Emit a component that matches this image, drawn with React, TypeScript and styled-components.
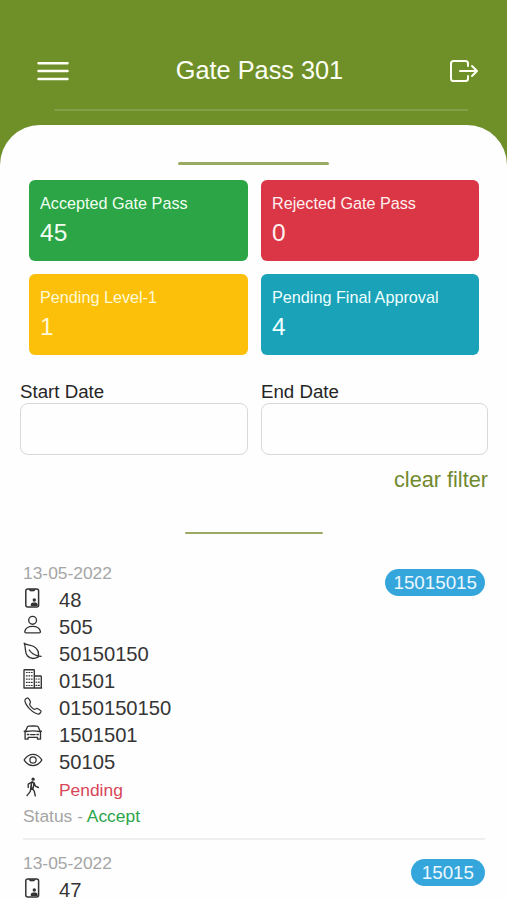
import React from "react";
import styled, { createGlobalStyle } from "styled-components";
import { IoExitOutline, IoCallOutline, IoEyeOutline } from "react-icons/io5";

const GlobalStyle = createGlobalStyle`
  * { box-sizing: border-box; }
  body {
    margin: 0;
    background: #fefefe;
    font-family: "Liberation Sans", Arial, sans-serif;
    overflow: hidden;
  }
`;

const Screen = styled.div`
  width: 507px;
  height: 900px;
  overflow: hidden;
  background: #6f9029;
`;

const Header = styled.header`
  height: 125px;
  padding: 31px 27px 0 37px;
`;

const TitleBar = styled.div`
  display: grid;
  grid-template-columns: 32px 1fr 32px;
  align-items: center;
  height: 80px;
`;

const Title = styled.h1`
  margin: -3px 0 0 2px;
  color: #fdfff5;
  font-size: 25.3px;
  font-weight: 400;
  line-height: 30px;
  text-align: center;
`;

const IconButton = styled.button`
  display: flex;
  width: 32px;
  height: 32px;
  padding: 0;
  border: 0;
  background: none;
  color: #fdfff5;
  font-size: 32px;
`;

const HeaderLine = styled.div`
  width: 414px;
  height: 2px;
  margin-left: 17px;
  margin-top: -2px;
  background: #83a048;
`;

const Sheet = styled.main`
  height: 775px;
  padding-top: 37px;
  border-radius: 40px 40px 0 0;
  background: #fefefe;
`;

const Accent = styled.div<{ $width: number; $height: number }>`
  width: ${(p) => p.$width}px;
  height: ${(p) => p.$height}px;
  margin: 0 auto;
  border-radius: 2px;
  background: #9baa62;
`;

const Cards = styled.section`
  display: grid;
  grid-template-columns: 219px 218px;
  grid-auto-rows: 81px;
  gap: 13px;
  margin: 15px 28px 0 29px;
`;

const Card = styled.div<{ $color: string; $ink: string }>`
  padding: 13px 10px 0 11px;
  border-radius: 6px;
  background: ${(p) => p.$color};
  color: ${(p) => p.$ink};
`;

const CardLabel = styled.div`
  font-size: 16.2px;
  line-height: 20px;
  white-space: nowrap;
`;

const CardValue = styled.div`
  margin-top: 5px;
  font-size: 24.5px;
  line-height: 30px;
`;

const Filters = styled.section`
  display: grid;
  grid-template-columns: 228px 227px;
  gap: 13px;
  margin: 26px 19px 0 20px;
`;

const Field = styled.label`
  display: flex;
  flex-direction: column;
  color: #252525;
  font-size: 18.7px;
  line-height: 22px;
`;

const DateInput = styled.input`
  width: 100%;
  height: 52px;
  border: 1.5px solid #d6d8da;
  border-radius: 8px;
  outline: 0;
  background: #fefefe;
`;

const ClearFilter = styled.button`
  display: block;
  margin: 11px 19px 38px auto;
  padding: 0;
  border: 0;
  background: none;
  color: #71892f;
  font-family: inherit;
  font-size: 21.7px;
  line-height: 28px;
`;

const List = styled.section`
  margin: 26px 22px 0 23px;
`;

const Pass = styled.article`
  display: flex;
  justify-content: space-between;
  align-items: flex-start;
  height: 280px;
  margin-bottom: 10px;
  border-bottom: 2px solid #efefef;
`;

const Details = styled.div`
  display: flex;
  flex-direction: column;
`;

const Muted = styled.div`
  height: 27px;
  color: #a5a5a5;
  font-size: 17.4px;
  line-height: 27px;
`;

const Accepted = styled.span`
  color: #2ba449;
`;

const Row = styled.div<{ $pending?: boolean }>`
  display: grid;
  grid-template-columns: 20px 1fr;
  column-gap: 16px;
  height: 27px;
  color: ${(p) => (p.$pending ? "#d84658" : "#353535")};
  font-size: ${(p) => (p.$pending ? "17.4px" : "20.2px")};
  line-height: ${(p) => (p.$pending ? "28px" : "27px")};
`;

const RowIcon = styled.span`
  display: flex;
  width: 20px;
  height: 20px;
  margin-top: 1px;
  color: #333;
  font-size: 20px;
`;

const Badge = styled.span<{ $inset: number }>`
  height: 27px;
  margin-top: 9px;
  padding: 0 ${(p) => p.$inset}px;
  border-radius: 14px;
  background: #35a6dc;
  color: #ecf8ff;
  font-size: 18.8px;
  line-height: 27px;
`;

const Glyph = ({ children }: { children: React.ReactNode }) => (
  <svg
    width="20"
    height="20"
    viewBox="0 0 20 20"
    fill="none"
    stroke="currentColor"
    strokeWidth="1.35"
    strokeLinecap="round"
    strokeLinejoin="round"
  >
    {children}
  </svg>
);

const MenuIcon = () => (
  <svg width="32" height="32" viewBox="0 0 32 32" stroke="currentColor" strokeWidth="2.5" strokeLinecap="round">
    <path d="M1.5 8.2H30.5M1.5 16H30.5M1.5 23.9H30.5" />
  </svg>
);

const DeviceIcon = () => (
  <Glyph>
    <rect x="2.8" y="0.9" width="12.8" height="18.1" rx="2" strokeWidth="1.5" />
    <path d="M6.2 1.3q.3 1.6 1.2 1.6h3.6q.9 0 1.2-1.6" fill="currentColor" strokeWidth=".8" />
    <circle cx="11.3" cy="12" r="1.7" fill="currentColor" stroke="none" />
    <path d="M7.8 18v-1.4q.2-2 2.2-2h2.4q2 0 2.2 2V18z" fill="currentColor" stroke="none" />
  </Glyph>
);

const PersonIcon = () => (
  <Glyph>
    <circle cx="9.6" cy="5.3" r="3.9" />
    <path d="M1.8 16.3c.8-3.5 4-5 7.8-5s7 1.5 7.8 5c.2.9-.4 1.6-1.3 1.6h-13c-.9 0-1.5-.7-1.3-1.6z" />
  </Glyph>
);

const LeafIcon = () => (
  <Glyph>
    <path d="M1.2 1.2c3 2.2 6.3 1.6 9.5 3.3 4.4 2.4 5.6 5.8 4.4 10.6-3.7 1.8-8.2 1.8-10.8-1.3C1.2 10.1 3.2 5.1 1.2 1.2z" />
    <path d="M6.3 8c2 3.2 4.4 4.9 8.8 6l3 .3" />
  </Glyph>
);

const BuildingIcon = () => (
  <Glyph>
    <path d="M1 19V1.3q0-.6.7-.6h9q.6 0 .6.6V19M11.3 7h6.2q.8 0 .8.8V19M1 19h17.6" />
    <path d="M3.4 3.5h5.8M3.4 6.8h5.8M3.4 10.1h5.8M3.4 13.4h5.8M3.4 16.5h5.8M13 10h3.5M13 13.2h3.5M13 16.4h3.5" strokeWidth="1.2" strokeDasharray=".8 1.7" />
  </Glyph>
);

const CarIcon = () => (
  <Glyph>
    <path d="M2.1 9.2 4.2 4.3q.4-1 1.4-1.1 4.2-.4 8.4 0 1 .1 1.4 1.1l2.1 4.9v6.9h-3v-1.8H5.1v1.8h-3z" />
    <path d="M1.2 8.2h1.2M17.2 8.2h1.2M3 8.5c4.3-.7 9.3-.7 13.6 0M4.4 11.5h1.4M13.9 11.5h1.4M7.6 11.6h4.5" />
  </Glyph>
);

const WalkIcon = () => (
  <Glyph>
    <circle cx="10.1" cy="2.2" r="1.6" fill="currentColor" stroke="none" />
    <path d="m7 6.1 2.4-1.3 1.7 1.1 1.3 3.2 3 1.4M7 6.1l-1.8 1v3.4M8.8 5.2l-.9 5.2 3.2 3.3 1.2 5.1M7.9 10.8l-.7 3.8-3.2 4M11 6.5l-.8 4.4" strokeWidth="1.4" />
    <path d="m8.7 5-.8 5.6 2.1.8 1.2-5z" strokeWidth="1.1" />
  </Glyph>
);

const cards = [
  { label: "Accepted Gate Pass", value: "45", color: "#2ba545", ink: "#f0fff1" },
  { label: "Rejected Gate Pass", value: "0", color: "#db3645", ink: "#fff0f0" },
  { label: "Pending Level-1", value: "1", color: "#fcc00a", ink: "#fff9d8" },
  { label: "Pending Final Approval", value: "4", color: "#19a2b8", ink: "#edffff" },
];

const details = [
  { icon: <DeviceIcon />, text: "48" },
  { icon: <PersonIcon />, text: "505" },
  { icon: <LeafIcon />, text: "50150150" },
  { icon: <BuildingIcon />, text: "01501" },
  { icon: <IoCallOutline />, text: "0150150150" },
  { icon: <CarIcon />, text: "1501501" },
  { icon: <IoEyeOutline />, text: "50105" },
];

export default function App() {
  return (
    <>
      <GlobalStyle />
      <Screen>
        <Header>
          <TitleBar>
            <IconButton aria-label="Menu"><MenuIcon /></IconButton>
            <Title>Gate Pass 301</Title>
            <IconButton aria-label="Log out"><IoExitOutline /></IconButton>
          </TitleBar>
          <HeaderLine />
        </Header>
        <Sheet>
          <Accent $width={151} $height={3} />
          <Cards>
            {cards.map((c) => (
              <Card key={c.label} $color={c.color} $ink={c.ink}>
                <CardLabel>{c.label}</CardLabel>
                <CardValue>{c.value}</CardValue>
              </Card>
            ))}
          </Cards>
          <Filters>
            <Field>Start Date<DateInput /></Field>
            <Field>End Date<DateInput /></Field>
          </Filters>
          <ClearFilter>clear filter</ClearFilter>
          <Accent $width={138} $height={2} />
          <List>
            <Pass>
              <Details>
                <Muted>13-05-2022</Muted>
                {details.map((d) => (
                  <Row key={d.text}><RowIcon>{d.icon}</RowIcon>{d.text}</Row>
                ))}
                <Row $pending><RowIcon><WalkIcon /></RowIcon>Pending</Row>
                <Muted>Status - <Accepted>Accept</Accepted></Muted>
              </Details>
              <Badge $inset={8}>15015015</Badge>
            </Pass>
            <Pass>
              <Details>
                <Muted>13-05-2022</Muted>
                <Row><RowIcon><DeviceIcon /></RowIcon>47</Row>
              </Details>
              <Badge $inset={11}>15015</Badge>
            </Pass>
          </List>
        </Sheet>
      </Screen>
    </>
  );
}
